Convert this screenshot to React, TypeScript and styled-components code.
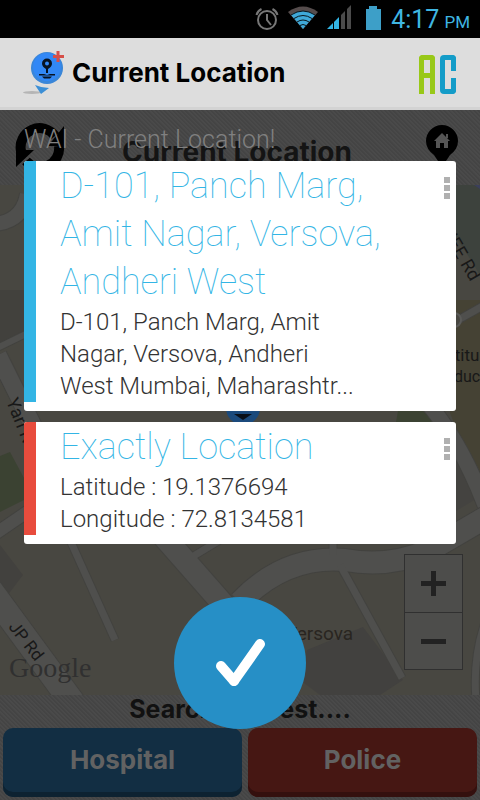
import React from "react";
import styled, { createGlobalStyle } from "styled-components";

const Global = createGlobalStyle`
  * { box-sizing: border-box; }
  body { margin: 0; background: #000; font-family: Roboto, sans-serif; }
  button { font: inherit; border: 0; padding: 0; cursor: pointer; }
  h1, h2, p { margin: 0; font-weight: inherit; }
`;

const Screen = styled.div`
  display: flex;
  flex-direction: column;
  min-height: 100vh;
`;

const StatusBar = styled.div`
  display: flex;
  align-items: center;
  justify-content: flex-end;
  height: 38px;
  padding-right: 10px;
  background: #000;
  color: #3fb6e2;
`;

const StatusIcons = styled.svg`
  width: 128px;
  height: 38px;
  margin-right: 9px;
`;

const Clock = styled.time`
  padding-top: 4px;
  font-size: 25px;
  line-height: 34px;
  small { font-size: 17px; margin-left: 5px; }
`;

const Header = styled.header`
  display: flex;
  align-items: center;
  height: 72px;
  padding: 0 24px 0 20px;
  background: #dddddd;
  border-bottom: 3px solid #d3d3d3;
`;

const PinLogo = styled.svg`
  width: 48px;
  height: 56px;
  margin-right: 4px;
`;

const HeaderTitle = styled.h1`
  flex: 1;
  font: 700 26px/36px Inter, sans-serif;
  color: #000;
`;

const Brand = styled.div`
  display: flex;
  gap: 5px;
  padding-top: 4px;
`;

const BrandA = styled.div`
  width: 16px;
  height: 39px;
  border: 5px solid #98c818;
  border-bottom: 0;
  border-radius: 4px 4px 0 0;
  padding-top: 13px;
  &::before { content: ""; display: block; height: 5px; background: #98c818; }
`;

const BrandC = styled.div`
  width: 16px;
  height: 39px;
  display: flex;
  flex-direction: column;
  justify-content: space-between;
  border-left: 5px solid #149cc8;
  border-radius: 4px;
  &::before, &::after {
    content: "";
    height: 11px;
    border: 5px solid #149cc8;
    border-left: 0;
  }
  &::before { border-bottom: 0; border-radius: 0 4px 0 0; }
  &::after { border-top: 0; border-radius: 0 0 4px 0; }
`;

const Stage = styled.main`
  flex: 1;
  display: grid;
  > * { grid-area: 1 / 1; min-width: 0; }
`;

const Backdrop = styled.div`
  display: flex;
  flex-direction: column;
  background:
    repeating-linear-gradient(45deg, #444 0 1px, #4a4a4a 2px 3px);
`;

const Toolbar = styled.div`
  display: grid;
  grid-template-columns: 1fr auto 1fr;
  align-items: start;
  height: 75px;
  padding: 12px 20px 0 14px;
`;

const IconButton = styled.button`
  justify-self: start;
  background: none;
  &:last-child { justify-self: end; }
  svg { display: block; }
`;

const ToolbarTitle = styled.h2`
  padding-top: 12px;
  font: 700 28px/36px Inter, sans-serif;
  color: #141414;
`;

const MapArea = styled.div`
  flex: 1;
  display: grid;
  min-height: 0;
  > * { grid-area: 1 / 1; }
`;

const MapDrawing = styled.svg`
  width: 100%;
  height: 100%;
  min-height: 510px;
`;

const Zoom = styled.div`
  align-self: end;
  justify-self: end;
  width: 59px;
  margin: 0 17px 25px 0;
  border: 1px solid #303030;
  background: #4d4d4b;
`;

const ZoomButton = styled.button`
  display: grid;
  place-items: center;
  width: 100%;
  height: 57px;
  background: none;
  & + & { border-top: 1px solid #303030; }
`;

const SearchLabel = styled.p`
  height: 33px;
  text-align: center;
  font: 700 25px/28px Inter, sans-serif;
  color: #111;
`;

const Actions = styled.div`
  display: grid;
  grid-template-columns: 24fr 23fr;
  gap: 6px;
  padding: 0 3px 3px;
`;

const ActionButton = styled.button<{ $face: string; $edge: string }>`
  && { font: 700 26px/64px Inter, sans-serif; }
  height: 69px;
  padding-bottom: 5px;
  border-radius: 10px;
  color: #626262;
  background: ${(p) => p.$face};
  box-shadow: inset 0 -5px 0 ${(p) => p.$edge};
`;

const Overlay = styled.div`
  z-index: 1;
  display: flex;
  flex-direction: column;
  padding: 15px 24px;
`;

const OverlayTitle = styled.h2`
  height: 36px;
  font-size: 25px;
  font-weight: 300;
  line-height: 30px;
  color: #808080;
`;

const Cards = styled.div`
  display: grid;
  gap: 11px;
`;

const Card = styled.article`
  display: flex;
  padding-bottom: 9px;
  border-radius: 3px;
  background: #fff;
  overflow: hidden;
`;

const Stripe = styled.div<{ $color: string }>`
  width: 12px;
  background: ${(p) => p.$color};
`;

const CardText = styled.div`
  flex: 1;
  min-width: 0;
  padding: 1px 0 0 24px;
`;

const CardTitle = styled.h2`
  max-width: 340px;
  font-size: 36px;
  font-weight: 100;
  line-height: 48px;
  color: #33b5e5;
`;

const CardBody = styled.p`
  max-width: 296px;
  font-size: 24px;
  font-weight: 300;
  line-height: 32px;
  color: #333;
`;

const MenuButton = styled.button`
  display: grid;
  gap: 2px;
  align-self: flex-start;
  padding: 16px 6px 0 0;
  background: none;
  span { width: 6px; height: 6px; background: #b0b0b0; }
`;

const Confirm = styled.button`
  display: grid;
  place-items: center;
  align-self: center;
  width: 132px;
  height: 132px;
  margin-top: 53px;
  border-radius: 50%;
  background: #268fc6;
`;

function StatusGlyphs() {
  return (
    <StatusIcons viewBox="256 0 128 38" aria-hidden="true">
      <g fill="none" stroke="#777" strokeWidth="2">
        <circle cx="269" cy="20" r="9" />
        <path d="M269 14v6l4 5M258.500 15q1-4 5-6M279.500 15q-1-4-5-6" />
      </g>
      <path d="M305 29L290 12q15-11 30 0z" fill="#554c4c" />
      <path d="M305 29L293 15q12-8 24 0z" fill="#3fa9d8" />
      <g fill="none" stroke="#07141a" strokeWidth="1">
        <path d="M293 15q12-8 24 0M296 18.500q9-6 18 0M299 22q6-4 12 0M302 25.500q3-2 6 0" />
      </g>
      <path d="M329 29l6-6v6z" fill="#33b5e5" />
      <path d="M336 22l5-5v12h-5z" fill="#33b5e5" />
      <path d="M343 15l4-4v18h-4zM349 9l4-4v24h-4z" fill="#4b4b4b" />
      <path d="M368 9h3V6h8v3h4v21h-15z" fill="#3d9fc8" />
    </StatusIcons>
  );
}

function CityMap() {
  return (
    <MapDrawing viewBox="0 185 480 510" preserveAspectRatio="xMidYMid slice" role="img" aria-label="Map of Versova">
      <path d="M0 185h480v510H0z" fill="#484741" />
      <path d="M430 185h50v90q-30-50-50-70z" fill="#3d423d" />
      <path d="M474 185h6v4z" fill="#3b3f5c" />
      <path d="M0 290h24v45l-24 8z" fill="#42413d" />
      <path d="M0 456L10 452 24 478V500L0 512z" fill="#3b4232" />
      <path d="M0 545L23 575 7 596 0 590z" fill="#42413e" />
      <path d="M307 650L363 627 403 680 380 695H320L300 680z" fill="#42413f" />
      <path d="M450 300h30v175q-12-18-30-62z" fill="#454234" />
      <path d="M400 400h20l12 22h-36z" fill="#3b4232" />
      <path d="M456 450l6 5 14 44-20 12z" fill="#444340" />
      <g fill="none" strokeLinejoin="round">
        <g stroke="#42423f">
          <path d="M-5 224q28-3 32-30" strokeWidth="16" />
          <path d="M-5 349L30 332" strokeWidth="8" />
          <path d="M-2 355L60 480" strokeWidth="19" />
          <path d="M-5 534L30 510" strokeWidth="14" />
          <path d="M-10 590L78 710" strokeWidth="27" />
          <path d="M70 540L115 640" strokeWidth="9" />
          <path d="M158 530L230 612" strokeWidth="24" />
          <path d="M187 560L220 540" strokeWidth="9" />
          <path d="M240 602Q285 555 345 560Q390 568 430 550L490 515" strokeWidth="24" />
          <path d="M340 565L402 678M333 530V555" strokeWidth="9" />
          <path d="M425 400q35 40 60 105" strokeWidth="17" />
          <path d="M458 320L490 302M490 610q-18 40-14 90" strokeWidth="9" />
        </g>
        <g stroke="#4f4f4d">
          <path d="M-5 224q28-3 32-30" strokeWidth="14" />
          <path d="M-5 349L30 332" strokeWidth="6" />
          <path d="M-2 355L60 480" strokeWidth="17" />
          <path d="M-5 534L30 510" strokeWidth="12" />
          <path d="M-10 590L78 710" strokeWidth="25" />
          <path d="M70 540L115 640" strokeWidth="7" />
          <path d="M187 560L220 540" strokeWidth="7" />
          <path d="M158 530L230 612" strokeWidth="22" />
          <path d="M240 602Q285 555 345 560Q390 568 430 550L490 515" strokeWidth="22" />
          <path d="M340 565L402 678M333 530V555" strokeWidth="7" />
          <path d="M425 400q35 40 60 105" strokeWidth="15" />
          <path d="M458 320L490 302M490 610q-18 40-14 90" strokeWidth="7" />
        </g>
      </g>
      <circle cx="454" cy="320" r="7" fill="#484741" stroke="#5a5a58" strokeWidth="2" />
      <circle cx="243" cy="408" r="17" fill="#1b4a7c" />
      <path d="M234 414h18l-9 6z" fill="#090f18" />
      <g fontFamily="Roboto, sans-serif" fill="#181818">
        <text transform="translate(6 401) rotate(68)" fontSize="18">Yari Rd</text>
        <text transform="translate(8 627) rotate(52)" fontSize="17">JP Rd</text>
        <text transform="translate(441 231) rotate(60)" fontSize="18">NEE Rd</text>
        <text x="446" y="361" fontSize="17">stitu</text>
        <text x="454" y="382" fontSize="16">duc</text>
        <text x="285" y="640" fontSize="19" fill="#292520">Versova</text>
      </g>
      <text x="9" y="677" fontFamily="Liberation Serif, serif" fontSize="28" fill="#303030">Google</text>
    </MapDrawing>
  );
}

type Entry = { color: string; title: string; lines: string[] };

const entries: Entry[] = [
  {
    color: "#33b5e5",
    title: "D-101, Panch Marg, Amit Nagar, Versova, Andheri West",
    lines: ["D-101, Panch Marg, Amit Nagar, Versova, Andheri West Mumbai, Maharashtr..."],
  },
  {
    color: "#e84c3d",
    title: "Exactly Location",
    lines: ["Latitude : 19.1376694", "Longitude : 72.8134581"],
  },
];

export default function App() {
  return (
    <Screen>
      <Global />
      <StatusBar>
        <StatusGlyphs />
        <Clock>4:17<small>PM</small></Clock>
      </StatusBar>
      <Header>
        <PinLogo viewBox="20 46 48 56" aria-hidden="true">
          <ellipse cx="32" cy="93.500" rx="9" ry="1.500" fill="#b5b5b5" />
          <path d="M35 86q7 3 14 3l-8 6z" fill="#3c8fd6" />
          <circle cx="47" cy="69" r="16" fill="#3a86d8" />
          <circle cx="47" cy="68" r="14" fill="#3288f6" />
          <path d="M47 59.500a5 5 0 0 1 5 5q0 3-4 5.500v4h-2v-4q-4-2.500-4-5.500a5 5 0 0 1 5-5z" fill="#071322" />
          <circle cx="47" cy="64.500" r="2" fill="#3288f6" />
          <path d="M39 75h5l3 1 3-1h5v1.500H39zM42 77.500h10l-2 2h-6z" fill="#071322" />
          <path d="M58 52v11M53 57.500h11" stroke="#d64f48" strokeWidth="3" />
        </PinLogo>
        <HeaderTitle>Current Location</HeaderTitle>
        <Brand role="img" aria-label="AC">
          <BrandA />
          <BrandC />
        </Brand>
      </Header>
      <Stage>
        <Backdrop>
          <Toolbar>
            <IconButton aria-label="Refresh">
              <svg width="52" height="46" viewBox="14 122 52 46">
                <path d="M21 151a19 19 0 0 1 34-15M59 146a19 19 0 0 1-33 15" fill="none" stroke="#000" strokeWidth="10" />
                <path d="M64 126v20H48zM16 150h18l-18 17z" fill="#000" />
              </svg>
            </IconButton>
            <ToolbarTitle>Current Location</ToolbarTitle>
            <IconButton aria-label="Home">
              <svg width="36" height="46" viewBox="423 122 36 46">
                <path d="M441 125a16 16 0 0 1 16 16q0 8-8 14l-8 12-8-12q-8-6-8-14a16 16 0 0 1 16-16z" fill="#000" />
                <path d="M441 133l8 8h-2v7h-4v-5h-4v5h-4v-7h-2zM445 134h2v4h-2z" fill="#555" />
              </svg>
            </IconButton>
          </Toolbar>
          <MapArea>
            <CityMap />
            <Zoom>
              <ZoomButton aria-label="Zoom in">
                <svg width="25" height="25"><path d="M0 12.500h25M12.500 0v25" stroke="#222" strokeWidth="5" /></svg>
              </ZoomButton>
              <ZoomButton aria-label="Zoom out">
                <svg width="25" height="5"><path d="M0 2.500h25" stroke="#222" strokeWidth="5" /></svg>
              </ZoomButton>
            </Zoom>
          </MapArea>
          <SearchLabel>Search Nearest....</SearchLabel>
          <Actions>
            <ActionButton $face="#122e43" $edge="#0d2231">Hospital</ActionButton>
            <ActionButton $face="#461713" $edge="#34100e">Police</ActionButton>
          </Actions>
        </Backdrop>
        <Overlay role="dialog" aria-label="Current location">
          <OverlayTitle>WAI - Current Location!</OverlayTitle>
          <Cards>
            {entries.map((entry) => (
              <Card key={entry.title}>
                <Stripe $color={entry.color} />
                <CardText>
                  <CardTitle>{entry.title}</CardTitle>
                  {entry.lines.map((line) => <CardBody key={line}>{line}</CardBody>)}
                </CardText>
                <MenuButton aria-label="More options"><span /><span /><span /></MenuButton>
              </Card>
            ))}
          </Cards>
          <Confirm aria-label="Confirm">
            <svg width="52" height="52" viewBox="214 637 52 52">
              <path d="M221 666l13 15" fill="none" stroke="#fff" strokeWidth="10" strokeLinecap="round" />
              <path d="M234 681l26-37" fill="none" stroke="#fff" strokeWidth="10" strokeLinecap="round" />
            </svg>
          </Confirm>
        </Overlay>
      </Stage>
    </Screen>
  );
}
